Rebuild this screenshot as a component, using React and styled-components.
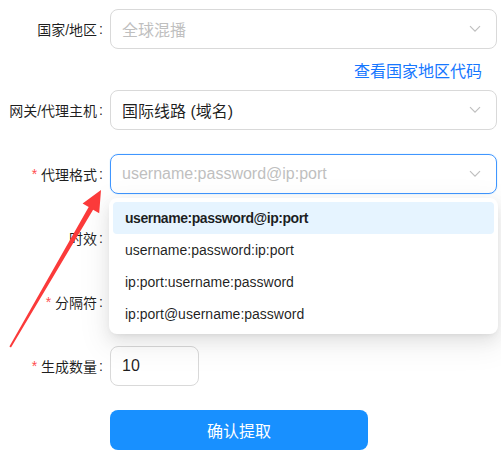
import React from "react";
import styled, { createGlobalStyle } from "styled-components";

const Global = createGlobalStyle`
  html, body { margin: 0; padding: 0; background: #fff; }
  body {
    font-family: "Liberation Sans", "Noto Sans CJK SC", sans-serif;
    color: rgba(0,0,0,0.88);
  }
  * { box-sizing: border-box; }
`;

const Page = styled.div`
  position: relative;
  width: 501px;
  height: 458px;
  padding: 9px 4px 0 0;
  overflow: hidden;
`;

const Form = styled.div`
  display: flex;
  flex-direction: column;
`;

const Row = styled.div`
  display: grid;
  grid-template-columns: 110px 1fr;
  align-items: center;
  margin-bottom: ${(p) => (p.$mb != null ? p.$mb : 24)}px;
  position: relative;
`;

const Label = styled.label`
  display: flex;
  justify-content: flex-end;
  align-items: center;
  padding-right: 7px;
  font-size: 14px;
  color: rgba(0,0,0,0.88);
  white-space: nowrap;
  &::before {
    content: ${(p) => (p.$required ? '"*"' : '""')};
    color: #ff4d4f;
    margin-right: 4px;
    font-family: "Liberation Sans", sans-serif;
    font-size: 14px;
  }
  &::after {
    content: ":";
    margin-left: 2px;
  }
`;

const Control = styled.div`
  position: relative;
  width: ${(p) => p.$w || "100%"};
`;

const Select = styled.div`
  height: 40px;
  border: 1px solid ${(p) => (p.$focus ? "#4096ff" : "#d9d9d9")};
  border-radius: 8px;
  display: flex;
  align-items: center;
  padding: 0 11px;
  font-size: 16px;
  background: #fff;
  box-shadow: ${(p) => (p.$focus ? "0 0 0 1px rgba(5,145,255,0.06)" : "none")};
`;

const Value = styled.span`
  flex: 1;
  color: ${(p) => (p.$placeholder ? "#bfbfbf" : "rgba(0,0,0,0.88)")};
  white-space: nowrap;
  overflow: hidden;
`;

const Chevron = () => (
  <svg width="12" height="8" viewBox="0 0 12 8" style={{ flexShrink: 0, marginRight: 4 }}>
    <path d="M1 1.2 L6 6.2 L11 1.2" fill="none" stroke="#bfbfbf" strokeWidth="1.2" />
  </svg>
);

const LinkRow = styled.div`
  display: flex;
  justify-content: flex-end;
  padding: 0 15px 0 0;
  height: 41px;
  align-items: center;
`;

const Link = styled.a`
  color: #1677ff;
  font-size: 16px;
  text-decoration: none;
`;

const Input = styled.div`
  height: 40px;
  border: 1px solid #d9d9d9;
  border-radius: 8px;
  display: flex;
  align-items: center;
  padding: 0 11px;
  font-size: 16px;
  color: rgba(0,0,0,0.88);
`;

const Dropdown = styled.div`
  position: absolute;
  top: 44px;
  left: -1px;
  right: -1px;
  z-index: 10;
  background: #fff;
  border-radius: 8px;
  padding: 4px;
  box-shadow: 0 6px 16px 0 rgba(0,0,0,0.08), 0 3px 6px -4px rgba(0,0,0,0.12), 0 9px 28px 8px rgba(0,0,0,0.05);
`;

const Option = styled.div`
  height: 32px;
  display: flex;
  align-items: center;
  padding: 0 12px;
  border-radius: 4px;
  font-size: 14px;
  font-weight: ${(p) => (p.$selected ? 600 : 400)};
  letter-spacing: ${(p) => (p.$selected ? "-0.45px" : "0")};
  background: ${(p) => (p.$selected ? "#e6f4ff" : "transparent")};
  color: rgba(0,0,0,0.88);
`;

const Button = styled.button`
  width: 258px;
  height: 40px;
  border: none;
  border-radius: 8px;
  background: #1890ff;
  color: #fff;
  font-size: 16px;
  font-family: inherit;
`;

const Arrow = styled.svg`
  position: absolute;
  left: 0;
  top: 0;
  pointer-events: none;
  z-index: 20;
`;

const options = [
  "username:password@ip:port",
  "username:password:ip:port",
  "ip:port:username:password",
  "ip:port@username:password",
];

export default function App() {
  return (
    <Page>
      <Global />
      <Form>
        <Row $mb={0}>
          <Label>国家/地区</Label>
          <Control>
            <Select>
              <Value $placeholder>全球混播</Value>
              <Chevron />
            </Select>
          </Control>
        </Row>
        <LinkRow>
          <Link>查看国家地区代码</Link>
        </LinkRow>
        <Row>
          <Label>网关/代理主机</Label>
          <Control>
            <Select>
              <Value>国际线路 (域名)</Value>
              <Chevron />
            </Select>
          </Control>
        </Row>
        <Row>
          <Label $required>代理格式</Label>
          <Control>
            <Select $focus>
              <Value $placeholder>username:password@ip:port</Value>
              <Chevron />
            </Select>
            <Dropdown>
              {options.map((o, i) => (
                <Option key={o} $selected={i === 0}>{o}</Option>
              ))}
            </Dropdown>
          </Control>
        </Row>
        <Row>
          <Label>时效</Label>
          <Control>
            <Select>
              <Value />
              <Chevron />
            </Select>
          </Control>
        </Row>
        <Row>
          <Label $required>分隔符</Label>
          <Control>
            <Input />
          </Control>
        </Row>
        <Row>
          <Label $required>生成数量</Label>
          <Control $w="89px">
            <Input>10</Input>
          </Control>
        </Row>
        <Row>
          <span />
          <Control>
            <Button>确认提取</Button>
          </Control>
        </Row>
      </Form>
      <Arrow width="501" height="458" viewBox="0 0 501 458">
        <polygon
          fill="#fb3a3a"
          points="101,190 99.2,213.3 93.1,209.8 11.0,347.6 9.4,346.6 88.7,207.0 82.6,203.5"
        />
      </Arrow>
    </Page>
  );
}
